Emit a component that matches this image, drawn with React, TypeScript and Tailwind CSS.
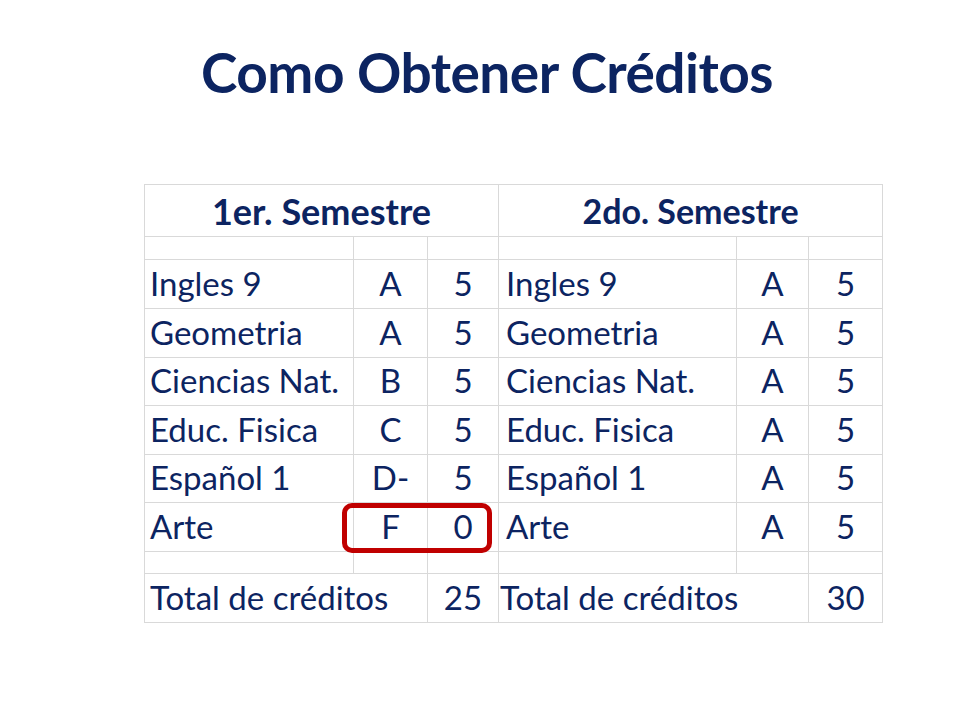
import React from "react";

const left = [
  ["Ingles 9", "A", "5"],
  ["Geometria", "A", "5"],
  ["Ciencias Nat.", "B", "5"],
  ["Educ. Fisica", "C", "5"],
  ["Español 1", "D-", "5"],
  ["Arte", "F", "0"],
];
const right = [
  ["Ingles 9", "A", "5"],
  ["Geometria", "A", "5"],
  ["Ciencias Nat.", "A", "5"],
  ["Educ. Fisica", "A", "5"],
  ["Español 1", "A", "5"],
  ["Arte", "A", "5"],
];
const heights = [49, 49, 48, 49, 48, 49];

const cell = "border border-[#d9d9d9] p-0 align-bottom leading-none";

export default function App() {
  return (
    <div
      className="w-[960px] h-[720px] bg-white text-[#0c2461]"
      style={{ fontFamily: "Lato, 'Liberation Sans', sans-serif" }}
    >
      <div className="pt-[45px] h-[184px]">
        <h1 className="text-center pl-[14px] text-[55px] font-bold leading-none text-[#0c2461] tracking-[-0.5px]">
          Como Obtener Créditos
        </h1>
      </div>
      <div className="relative ml-[144px] w-[738px]">
        <table className="table-fixed border-collapse w-[738px] text-[33px]">
          <colgroup>
            <col className="w-[209px]" />
            <col className="w-[74px]" />
            <col className="w-[71px]" />
            <col className="w-[238px]" />
            <col className="w-[72px]" />
            <col className="w-[74px]" />
          </colgroup>
          <tbody>
            <tr className="h-[52px]">
              <td colSpan={3} className={`${cell} text-center font-bold text-[36px] pb-[7px]`}>
                1er. Semestre
              </td>
              <td colSpan={3} className={`${cell} text-center font-bold text-[34px] pb-[8px]`}>
                2do. Semestre
              </td>
            </tr>
            <tr className="h-[23px]">
              {[0, 1, 2, 3, 4, 5].map((i) => (
                <td key={i} className={cell}></td>
              ))}
            </tr>
            {left.map((r, i) => (
              <tr key={i} style={{ height: heights[i] }}>
                <td className={`${cell} pl-[5px] pb-[8px]`}>{r[0]}</td>
                <td className={`${cell} text-center pb-[8px]`}>{r[1]}</td>
                <td className={`${cell} text-center pb-[8px]`}>{r[2]}</td>
                <td className={`${cell} pl-[7px] pb-[8px]`}>{right[i][0]}</td>
                <td className={`${cell} text-center pb-[8px]`}>{right[i][1]}</td>
                <td className={`${cell} text-center pb-[8px]`}>{right[i][2]}</td>
              </tr>
            ))}
            <tr className="h-[22px]">
              {[0, 1, 2, 3, 4, 5].map((i) => (
                <td key={i} className={cell}></td>
              ))}
            </tr>
            <tr className="h-[49px]">
              <td colSpan={2} className={`${cell} pl-[5px] pb-[8px]`}>
                Total de créditos
              </td>
              <td className={`${cell} text-center pb-[8px]`}>25</td>
              <td colSpan={2} className={`${cell} pl-[1px] pb-[8px]`}>
                Total de créditos
              </td>
              <td className={`${cell} text-center pb-[8px]`}>30</td>
            </tr>
          </tbody>
        </table>
        <div className="absolute left-[198px] top-[319px] w-[150px] h-[50px] rounded-[10px] border-[5px] border-[#c00000]"></div>
      </div>
    </div>
  );
}
